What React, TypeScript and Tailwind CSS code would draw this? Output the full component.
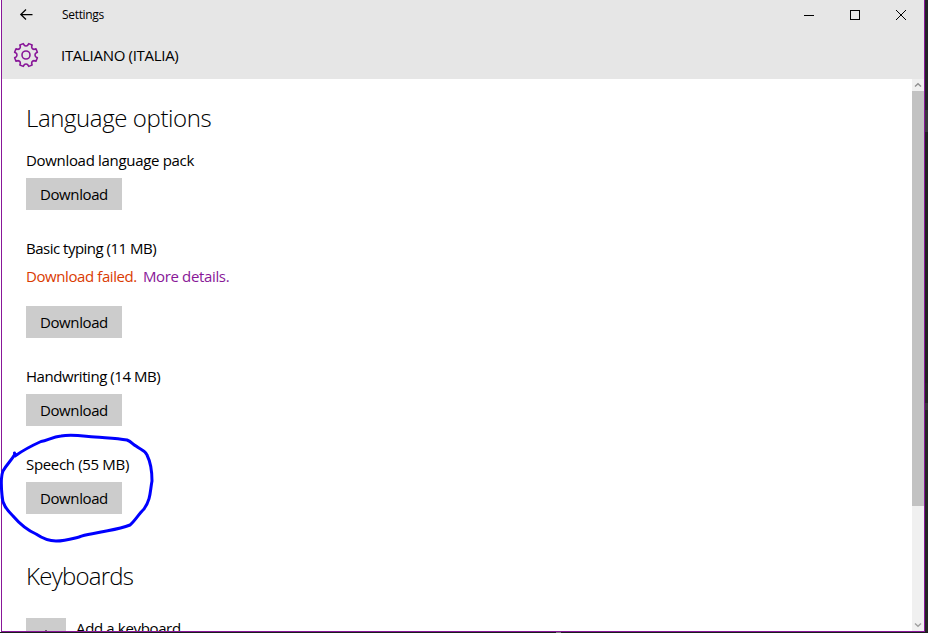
import React from "react";

const polar = (radius: number, degrees: number) => {
  const a = (degrees * Math.PI) / 180;
  return `${(13 + radius * Math.cos(a)).toFixed(2)} ${(13 + radius * Math.sin(a)).toFixed(2)}`;
};

// Eight flat teeth separated by rounded notches.
const gearPath =
  Array.from({ length: 8 }, (_, i) => {
    const c = 22.5 + i * 45;
    return `${i === 0 ? "M" : "L"}${polar(11.7, c - 9)} L${polar(11.7, c + 9)} L${polar(10, c + 12)} A2.5 2.5 0 0 0 ${polar(10, c + 33)}`;
  }).join(" ") + " Z";

function Gear() {
  return (
    <svg className="h-[26px] w-[26px]" viewBox="0 0 26 26" fill="none" stroke="#881798" strokeWidth="1.6">
      <path d={gearPath} strokeLinejoin="round" />
      <circle cx="13" cy="13" r="4" />
    </svg>
  );
}

function DownloadButton() {
  return (
    <button className="block h-8 w-24 bg-[#cccccc] pl-[14px] text-left text-[15px] leading-8 tracking-[-0.4px]">
      Download
    </button>
  );
}

function Label({ className, children }: { className: string; children: React.ReactNode }) {
  return <div className={`h-5 whitespace-nowrap text-[15px] leading-5 ${className}`}>{children}</div>;
}

function TitleBar() {
  return (
    <div className="flex h-[30px] items-center">
      <svg className="ml-4 h-4 w-4" viewBox="0 0 16 16" fill="none" stroke="#000" strokeWidth="1.25">
        <path d="M14.500 7.500H3M8 2.500L2.800 7.500L8 12.500" />
      </svg>
      <span className="ml-7 text-[12px] leading-4 tracking-[-0.32px]">Settings</span>
      <svg className="ml-auto h-[30px] w-[138px]" viewBox="0 0 138 30" fill="none" stroke="#000" shapeRendering="crispEdges">
        <path d="M18 15.5H28" />
        <rect x="64.5" y="10.5" width="9" height="9" />
        <path d="M110 10L120 20M120 10L110 20" shapeRendering="auto" />
      </svg>
    </div>
  );
}

function ScrollBar() {
  return (
    <div className="flex w-3 flex-col bg-[#f0f0f0]">
      <svg className="h-3 w-3" viewBox="0 0 12 12" fill="none" stroke="#8f8f8f" strokeWidth="1.4">
        <path d="M3 7.5L6 4.8L9 7.5" />
      </svg>
      <div className="h-[415px] bg-[#c2c2c2]" />
      <svg className="mt-auto h-3 w-3" viewBox="0 0 12 12" fill="none" stroke="#a0a0a0" strokeWidth="1.4">
        <path d="M3 4.5L6 7.2L9 4.5" />
      </svg>
    </div>
  );
}

export default function App() {
  return (
    <div className="relative flex h-[633px] w-[928px] flex-col overflow-hidden bg-[#1d1a1f] font-['Open_Sans',sans-serif] text-black">
      <div className="flex h-[632px] shrink-0">
        <div className="w-px bg-white" />
        <div className="flex w-[924px] flex-col overflow-hidden border-x border-b border-[#881798] bg-white">
          <header className="h-[79px] shrink-0 bg-[#e6e6e6]">
            <TitleBar />
            <div className="flex h-[49px] items-center pl-[11px]">
              <Gear />
              <span className="ml-[22px] mt-px text-[15px] leading-5 tracking-[-0.3px]">ITALIANO (ITALIA)</span>
            </div>
          </header>
          <div className="flex min-h-0 flex-1">
            <main className="flex-1 overflow-hidden pl-6 pt-[23px]">
              <h1 className="h-8 text-[24px] font-light leading-8 tracking-[-0.4px]">Language options</h1>
              <div className="mt-4">
                <Label className="tracking-[-0.32px]">Download language pack</Label>
                <div className="mt-2"><DownloadButton /></div>
              </div>
              <div className="mt-7">
                <Label className="tracking-[-0.5px]">Basic typing (11 MB)</Label>
                <div className="mt-2 flex h-5 gap-[6px] whitespace-nowrap text-[15px] leading-5">
                  <span className="tracking-[-0.41px] text-[#da3b01]">Download failed.</span>
                  <a className="tracking-[-0.35px] text-[#881798]">More details.</a>
                </div>
                <div className="mt-5"><DownloadButton /></div>
              </div>
              <div className="mt-7">
                <Label className="tracking-[-0.45px]">Handwriting (14 MB)</Label>
                <div className="mt-2"><DownloadButton /></div>
              </div>
              <div className="mt-7">
                <Label className="tracking-[-0.33px]">Speech (55 MB)</Label>
                <div className="mt-2"><DownloadButton /></div>
              </div>
              <h2 className="mt-[46px] h-8 text-[24px] font-light leading-8 tracking-[-0.75px]">Keyboards</h2>
              <div className="mt-[26px] flex">
                <div className="flex h-10 w-10 justify-center bg-[#cccccc] pt-3">
                  <svg className="h-4 w-4" viewBox="0 0 16 16" stroke="#000" fill="none">
                    <path d="M8 0V16M0 8H16" />
                  </svg>
                </div>
                <span className="ml-[10px] whitespace-nowrap text-[15px] leading-5 tracking-[-0.35px]">Add a keyboard</span>
              </div>
            </main>
            <ScrollBar />
          </div>
        </div>
        <div className="w-[3px] bg-[#242424]">
          <div className="h-[110px] bg-[#242228]" />
          <div className="h-[22px] bg-[#39363c]" />
          <div className="h-[251px] bg-[#202020]" />
          <div className="mt-5 h-[7px] bg-[#38363a]" />
        </div>
      </div>
      <div className="ml-[556px] h-px w-[5px] shrink-0 bg-[#777777]" />
      <svg className="pointer-events-none absolute left-0 top-[425px] h-[125px] w-[170px]" viewBox="0 0 170 125" fill="none" stroke="#0000ff" strokeWidth="3" strokeLinecap="round" strokeLinejoin="round">
        <path d="M14.5 28L15 31C22 26 31 21 41 16.500C47 16 52 12 61 11C72 9 82 11 95 12C108 13 117 13 127 15C132 17 133 20 136 21C141 25 145 25 147 30C151 38 152 46 152 56C150 66 151 74 144 84C138 90 134 97 130 100C120 104 111 105 101 107C93 109 86 109 79 112C71 114 65 116 56 116C48 116 42 113 36 109C27 105 19 98 13 91C7 85 2 79 2 70C1 60 1 51 3 46C7 39 11 36 15 29" />
      </svg>
    </div>
  );
}
